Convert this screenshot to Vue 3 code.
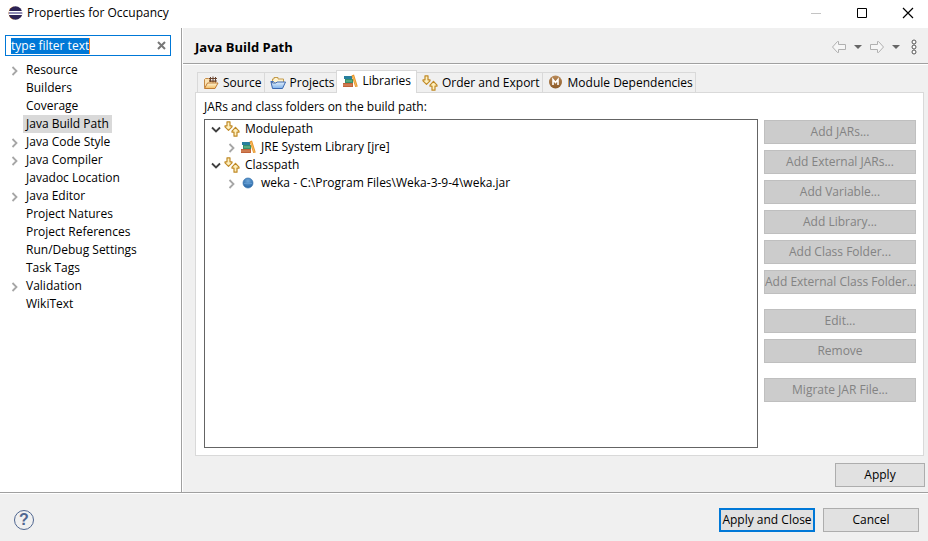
<script setup>
import { onMounted, ref } from "vue";

const filter = ref("type filter text");
const filterInput = ref();
const page = ref("Java Build Path");
const tab = ref("Libraries");

const pages = [
  { name: "Resource", children: true },
  { name: "Builders" },
  { name: "Coverage" },
  { name: "Java Build Path" },
  { name: "Java Code Style", children: true },
  { name: "Java Compiler", children: true },
  { name: "Javadoc Location" },
  { name: "Java Editor", children: true },
  { name: "Project Natures" },
  { name: "Project References" },
  { name: "Run/Debug Settings" },
  { name: "Task Tags" },
  { name: "Validation", children: true },
  { name: "WikiText" },
];

const tabs = [
  { name: "Source", icon: "source" },
  { name: "Projects", icon: "projects" },
  { name: "Libraries", icon: "library" },
  { name: "Order and Export", icon: "order" },
  { name: "Module Dependencies", icon: "module" },
];

const entries = [
  { name: "Modulepath", icon: "order", open: true },
  { name: "JRE System Library [jre]", icon: "library", child: true },
  { name: "Classpath", icon: "order", open: true },
  { name: "weka - C:\\Program Files\\Weka-3-9-4\\weka.jar", icon: "jar", child: true },
];

const actionGroups = [
  [
    "Add JARs...",
    "Add External JARs...",
    "Add Variable...",
    "Add Library...",
    "Add Class Folder...",
    "Add External Class Folder...",
  ],
  ["Edit...", "Remove"],
  ["Migrate JAR File..."],
];

function clearFilter() {
  filter.value = "";
  filterInput.value.focus();
}

onMounted(() => {
  filterInput.value.focus();
  filterInput.value.select();
});
</script>

<template>
  <svg class="symbols" aria-hidden="true">
    <defs>
      <linearGradient id="gold" x1="0" y1="0" x2="0" y2="1">
        <stop offset="0" stop-color="#fff6d8" />
        <stop offset="1" stop-color="#f3bd63" />
      </linearGradient>
      <linearGradient id="blue" x1="0" y1="0" x2="0" y2="1">
        <stop offset="0" stop-color="#e4f0fc" />
        <stop offset="1" stop-color="#7fb2ea" />
      </linearGradient>
      <radialGradient id="ball" cx="0.5" cy="0.3" r="0.7">
        <stop offset="0" stop-color="#6fa6d8" />
        <stop offset="1" stop-color="#2464a4" />
      </radialGradient>
      <linearGradient id="bronze" x1="0" y1="0" x2="0" y2="1">
        <stop offset="0" stop-color="#b98a58" />
        <stop offset="1" stop-color="#8c5a28" />
      </linearGradient>
    </defs>
    <symbol id="source" viewBox="0 0 16 16">
      <path d="M1.500 12.500v-8l1-1h3l1 1v2h6v6z" fill="#fbe3b5" stroke="#c58a45" />
      <path d="M6 3.500h8M6 6h8M7.500 2v5M10 1.500v6M12.500 2v5" fill="none" stroke="#6b4632" />
      <path d="M1.500 13.500l3-5.500h10.500l-3 5.500z" fill="url(#gold)" stroke="#c07c34" />
    </symbol>
    <symbol id="projects" viewBox="0 0 16 16">
      <path d="M2.500 12.500v-8.500h1.500v-1.500h4v1.500h5.500v4" fill="#fff3cf" stroke="#c39a4a" />
      <path d="M.5 6.500h3l1 1" fill="none" stroke="#4470b4" />
      <path d="M2.500 13.500L1 7l2 1h3l1-1h8.500l-3 6.500z" fill="url(#blue)" stroke="#3c68b0" />
    </symbol>
    <symbol id="library" viewBox="0 0 16 16">
      <rect x="2" y="3" width="8" height="3" fill="#287f9e" />
      <rect x="3" y="6" width="8" height="4" fill="#35906b" />
      <path d="M4 8h6" stroke="#7cc49b" />
      <rect x="1" y="10" width="10" height="4" fill="#c0633a" />
      <path d="M1 12h9" stroke="#dd9568" />
      <path d="M9.500 2.500l2.500-1 3.800 12-2.600 .5z" fill="#e8952b" />
      <path d="M11 3l3.200 10" stroke="#f6bd60" />
    </symbol>
    <symbol id="order" viewBox="0 0 16 16" stroke-linejoin="round">
      <path d="M3 .8h3v4h2v1L4.500 9.300 1 5.800v-1h2z" fill="#fff0bd" stroke="#c08a28" stroke-width="1.200" />
      <path d="M10 15.200h3v-4h2v-1L11.500 6.300 8 10.200v1h2z" fill="#fff0bd" stroke="#c08a28" stroke-width="1.200" />
    </symbol>
    <symbol id="module" viewBox="0 0 16 16">
      <circle cx="7.500" cy="7" r="6.500" fill="url(#bronze)" />
      <path d="M5 10V4.500l2.500 3 2.500-3V10" fill="none" stroke="#fff" stroke-width="1.600" />
    </symbol>
    <symbol id="jar" viewBox="0 0 16 16">
      <circle cx="8" cy="8" r="5" fill="url(#ball)" stroke="#3a76b0" stroke-width=".7" />
      <path d="M4 8.500h8" stroke="#5d98d0" />
    </symbol>
    <symbol id="closed" viewBox="0 0 16 16">
      <path d="M5.500 5l4 4-4 4" fill="none" stroke="#a6a6a6" stroke-width="1.800" />
    </symbol>
    <symbol id="opened" viewBox="0 0 16 16">
      <path d="M4 6.500l4 4 4-4" fill="none" stroke="#404040" stroke-width="1.800" />
    </symbol>
    <symbol id="arrow" viewBox="0 0 16 14">
      <path d="M1.500 7l5-5.500h1v3h7v5h-7v3h-1z" fill="#f6f6f6" stroke="#b0b0b0" stroke-linejoin="round" />
    </symbol>
  </svg>

  <div class="window">
    <header class="titlebar">
      <svg class="logo" viewBox="0 0 16 16" aria-hidden="true">
        <path d="M7 1.200a7 7 0 0 0 0 13.600A9 9 0 0 1 7 1.200z" fill="#f7941e" />
        <circle cx="8.500" cy="8" r="6.800" fill="#2c2255" />
        <path d="M2 6.500h13M2 9.500h13" stroke="#fff" stroke-width="1" />
        <path d="M2 8h13" stroke="#8f8bb5" stroke-width="2" />
      </svg>
      <h1>Properties for Occupancy</h1>
      <div class="window-buttons">
        <button aria-label="Minimize" disabled>
          <svg viewBox="0 0 12 12"><path d="M1 6.500h10" stroke="#c4c4c4" /></svg>
        </button>
        <button aria-label="Maximize">
          <svg viewBox="0 0 12 12"><path d="M1.500 1.500h9v9h-9z" fill="none" stroke="#000" /></svg>
        </button>
        <button aria-label="Close">
          <svg viewBox="0 0 12 12"><path d="M1 1l10 10M11 1L1 11" stroke="#000" stroke-width="1.200" /></svg>
        </button>
      </div>
    </header>

    <div class="body">
      <nav class="sidebar">
        <div class="filter">
          <input ref="filterInput" v-model="filter" type="text" aria-label="Filter" spellcheck="false" />
          <button aria-label="Clear" @click="clearFilter">
            <svg viewBox="0 0 9 9"><path d="M1 1l7 7M8 1L1 8" stroke="#777" stroke-width="2" /></svg>
          </button>
        </div>
        <ul class="tree">
          <li v-for="item in pages" :key="item.name">
            <svg class="icon"><use v-if="item.children" href="#closed" /></svg>
            <button :class="{ selected: item.name === page }" @click="page = item.name">{{ item.name }}</button>
          </li>
        </ul>
      </nav>

      <main class="main">
        <div class="heading">
          <h2>Java Build Path</h2>
          <div class="history">
            <button aria-label="Back"><svg class="arrow"><use href="#arrow" /></svg></button>
            <button aria-label="Back history"><svg class="drop" viewBox="0 0 8 4"><path d="M0 0h8L4 4z" fill="#666" /></svg></button>
            <button aria-label="Forward"><svg class="arrow forward"><use href="#arrow" /></svg></button>
            <button aria-label="Forward history"><svg class="drop" viewBox="0 0 8 4"><path d="M0 0h8L4 4z" fill="#666" /></svg></button>
            <button aria-label="Menu">
              <svg class="menu" viewBox="0 0 6 16" fill="#fff" stroke="#555">
                <circle cx="3" cy="3" r="2" />
                <circle cx="3" cy="8" r="2" />
                <circle cx="3" cy="13" r="2" />
              </svg>
            </button>
          </div>
        </div>

        <div class="content">
          <div class="tabs" role="tablist">
            <button
              v-for="item in tabs"
              :key="item.name"
              role="tab"
              :aria-selected="item.name === tab"
              :class="{ active: item.name === tab }"
              @click="tab = item.name"
            >
              <svg class="icon"><use :href="'#' + item.icon" /></svg>
              <span>{{ item.name }}</span>
            </button>
          </div>
          <section class="panel">
            <p id="entries-label">JARs and class folders on the build path:</p>
            <div class="columns">
              <ul class="entries" aria-labelledby="entries-label">
                <li v-for="item in entries" :key="item.name" :class="{ child: item.child }">
                  <svg class="icon"><use :href="item.open ? '#opened' : '#closed'" /></svg>
                  <svg class="icon"><use :href="'#' + item.icon" /></svg>
                  <span>{{ item.name }}</span>
                </li>
              </ul>
              <div class="actions">
                <div v-for="(group, i) in actionGroups" :key="i" class="group">
                  <button v-for="name in group" :key="name" disabled>{{ name }}</button>
                </div>
              </div>
            </div>
          </section>
          <div class="apply">
            <button class="push">Apply</button>
          </div>
        </div>
      </main>
    </div>

    <footer class="footer">
      <button class="help" aria-label="Help">?</button>
      <button class="push default">Apply and Close</button>
      <button class="push">Cancel</button>
    </footer>
  </div>
</template>

<style>
body {
  margin: 0;
}
</style>

<style scoped>
.window {
  display: flex;
  flex-direction: column;
  min-height: 100vh;
  background: #f0f0f0;
  color: #000;
  font: 12px/18px "Open Sans", "Noto Sans", sans-serif;
}
.symbols {
  position: absolute;
  width: 0;
  height: 0;
}
* {
  box-sizing: border-box;
}
button,
input {
  margin: 0;
  padding: 0;
  border: 0;
  background: none;
  color: inherit;
  font: inherit;
}
button {
  white-space: nowrap;
}
svg {
  display: block;
}
h1,
h2,
p,
ul {
  margin: 0;
  padding: 0;
  font-size: inherit;
  list-style: none;
}
.icon {
  flex: none;
  width: 16px;
  height: 16px;
}

.titlebar {
  display: flex;
  align-items: center;
  height: 28px;
  padding: 0 14px 3px 7px;
  background: #fff;
}
.logo {
  width: 16px;
  height: 16px;
}
.titlebar h1 {
  flex: 1;
  margin-left: 4px;
  font-weight: 400;
}
.window-buttons {
  display: flex;
  gap: 34px;
}
.window-buttons svg {
  width: 12px;
  height: 12px;
}

.body {
  display: flex;
  flex: 1;
  border-bottom: 1px solid #a0a0a0;
}
.sidebar {
  flex: none;
  width: 182px;
  padding: 7px 10px 0 5px;
  border-right: 1px solid #a0a0a0;
  background: #fff;
}
.filter {
  display: flex;
  align-items: center;
  justify-content: space-between;
  height: 21px;
  padding: 0 4px 0 5px;
  border: 1px solid #0078d7;
}
.filter input {
  field-sizing: content;
  max-width: 130px;
  height: 16px;
  border-right: 1px solid #ff8728;
  outline: 0;
  line-height: 16px;
}
.filter input::selection {
  background: #0078d7;
  color: #fff;
}
.filter svg {
  width: 9px;
  height: 9px;
}
.tree {
  margin-top: 5px;
  padding-left: 2px;
}
.tree li {
  display: flex;
  align-items: center;
  height: 18px;
}
.tree button {
  padding: 0 3px;
}
.tree .selected {
  background: #d9d9d9;
}

.main {
  display: flex;
  flex: 1;
  flex-direction: column;
  min-width: 0;
  border-left: 1px solid #fff;
}
.heading {
  display: flex;
  align-items: center;
  justify-content: space-between;
  height: 36px;
  padding: 2px 11px 0 12px;
  border-bottom: 1px solid #a0a0a0;
  box-shadow: 0 1px #fff;
}
.heading h2 {
  font-size: 13px;
}
.history {
  display: flex;
  align-items: center;
  gap: 7px;
}
.arrow {
  width: 16px;
  height: 14px;
}
.forward {
  transform: scaleX(-1);
}
.drop {
  width: 8px;
  height: 4px;
}
.menu {
  width: 6px;
  height: 16px;
  margin-left: 4px;
}

.content {
  display: flex;
  flex: 1;
  flex-direction: column;
  padding: 6px 3px 5px 12px;
}
.tabs {
  display: flex;
  align-items: flex-end;
  padding-left: 2px;
}
.tabs button {
  display: flex;
  align-items: center;
  gap: 4px;
  height: 20px;
  padding: 0 2px 0 5px;
  border: 1px solid #d9d9d9;
  border-width: 1px 1px 0 0;
}
.tabs button:first-child {
  border-left-width: 1px;
}
.tabs .active {
  position: relative;
  z-index: 1;
  height: 23px;
  margin: 0 0 -1px -1px;
  padding: 0 5px 2px;
  border-left-width: 1px;
  background: #fff;
}
.panel {
  display: flex;
  flex: 1;
  flex-direction: column;
  margin-right: 1px;
  padding: 5px 7px 7px 8px;
  border: 1px solid #d9d9d9;
  background: #fff;
}
.columns {
  display: flex;
  flex: 1;
  gap: 6px;
  margin-top: 3px;
}
.entries {
  flex: 1;
  border: 1px solid #646464;
}
.entries li {
  display: flex;
  align-items: center;
  height: 18px;
  padding-left: 3px;
}
.entries .child {
  padding-left: 19px;
}
.entries span {
  margin-left: 5px;
}
.actions {
  display: flex;
  flex: none;
  flex-direction: column;
  gap: 15px;
  width: 152px;
  padding-top: 1px;
}
.group {
  display: flex;
  flex-direction: column;
  gap: 6px;
}
.actions button {
  height: 24px;
  border: 1px solid #bfbfbf;
  background: #ccc;
  color: #838383;
}

.apply {
  display: flex;
  justify-content: flex-end;
  padding-top: 7px;
}
.push {
  min-width: 96px;
  height: 24px;
  border: 1px solid #adadad;
  background: #e1e1e1;
}
.apply .push {
  min-width: 90px;
}
.push.default {
  border: 2px solid #0078d7;
}

.footer {
  display: flex;
  align-items: center;
  gap: 8px;
  height: 48px;
  padding: 4px 9px 0 14px;
  border-top: 1px solid #fff;
}
.help {
  width: 20px;
  height: 20px;
  margin-right: auto;
  border: 1px solid #4f6690;
  border-radius: 50%;
  color: #4f6690;
  font: 700 16px/18px "Liberation Sans", sans-serif;
}
</style>
